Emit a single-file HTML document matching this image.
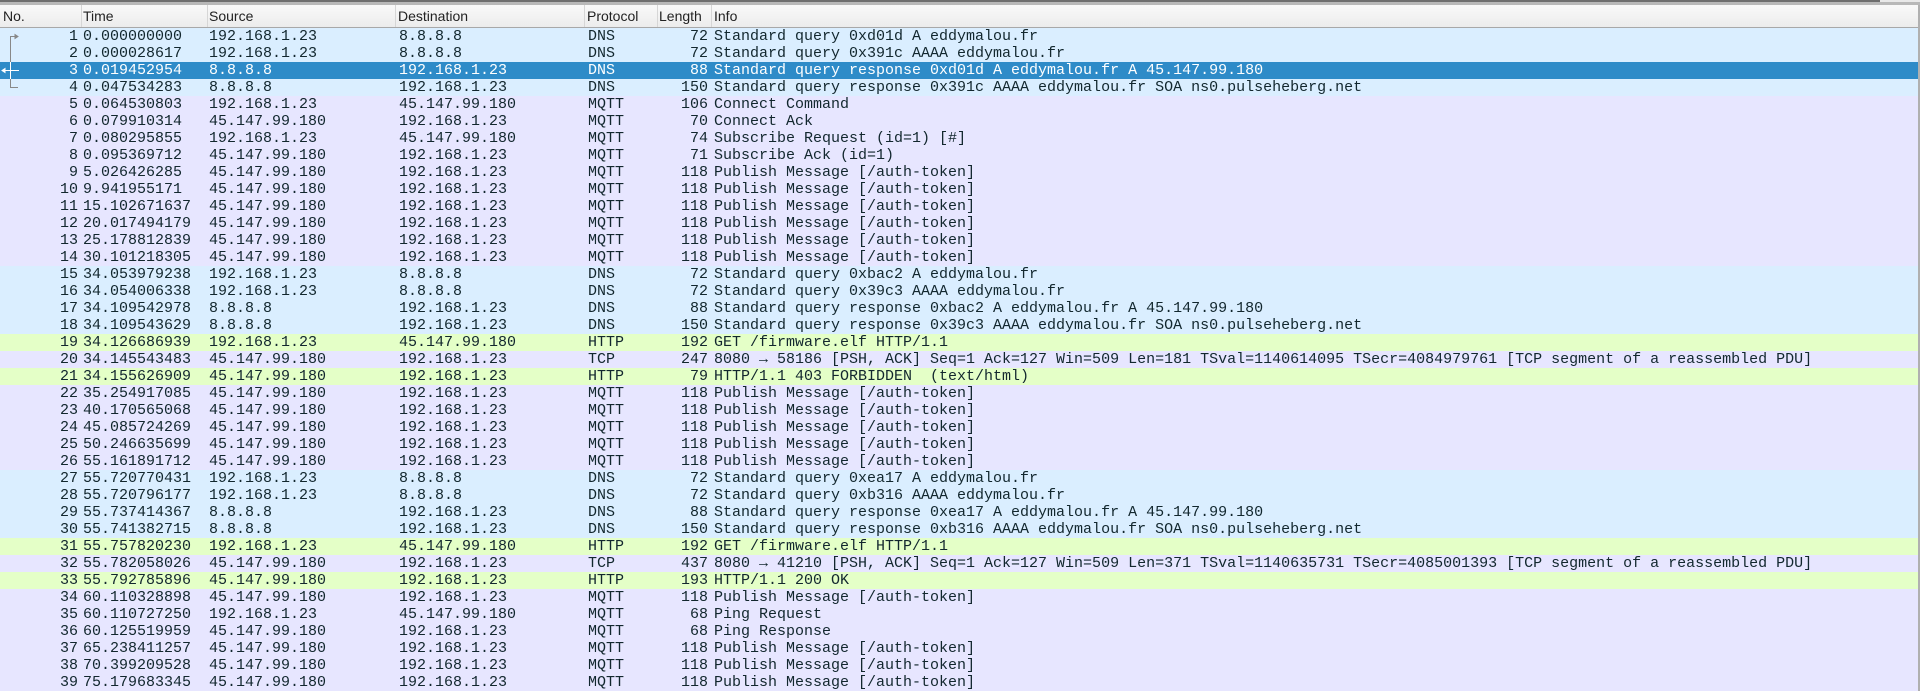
<!DOCTYPE html>
<html><head><meta charset="utf-8"><style>
html,body{margin:0;padding:0;width:1920px;height:691px;overflow:hidden;background:#e8e8e8;}
#top{position:absolute;left:0;top:0;width:1880px;height:2px;background:#6e6e6e;}
#top2{position:absolute;left:0;top:2px;width:1920px;height:3px;background:#b8b8b8;}
#hdr{position:absolute;left:0;top:5px;width:1918px;height:22px;background:linear-gradient(#f9f9f9,#ececec);border-bottom:1px solid #a8a8a8;font:14px "Liberation Sans",sans-serif;color:#222;}
#hdr span{position:absolute;top:3px;}
#hdr i{position:absolute;top:0;width:1px;height:22px;background:#d6d6d6;}
#rows{position:absolute;left:0;top:28px;width:1918px;}
.r{position:relative;height:17px;font:15px "Liberation Mono",monospace;color:#12272e;white-space:pre;}
.r span{position:absolute;top:0;line-height:17px;}
.d{background:#daeeff}.m{background:#e7e6ff}.h{background:#e4ffc7}
.s{background:#2e8bc8;color:#fff}
.n{right:calc(1918px - 78px)}
.l{right:calc(1918px - 708px)}
#edge{position:absolute;left:1918px;top:5px;width:2px;height:686px;background:#b0b0b0;}
</style></head><body>
<div id="top"></div><div id="top2"></div>
<div id="hdr">
<span style="left:3px">No.</span><i style="left:81px"></i>
<span style="left:83px">Time</span><i style="left:207px"></i>
<span style="left:209px">Source</span><i style="left:395px"></i>
<span style="left:398px">Destination</span><i style="left:584px"></i>
<span style="left:587px">Protocol</span><i style="left:657px"></i>
<span style="left:659px">Length</span><i style="left:711px"></i>
<span style="left:714px">Info</span>
</div>
<div id="rows">
<div class="r d"><svg style="position:absolute;left:0;top:0" width="24" height="17"><path d="M10 8.5H18M18 8.5l-3-2v4z" stroke="#888" fill="#888"/><path d="M10.5 8.5V17" stroke="#888"/></svg><span class="n">1</span><span style="left:83px">0.000000000</span><span style="left:209px">192.168.1.23</span><span style="left:399px">8.8.8.8</span><span style="left:588px">DNS</span><span class="l">72</span><span style="left:714px">Standard query 0xd01d A eddymalou.fr</span></div>
<div class="r d"><svg style="position:absolute;left:0;top:0" width="24" height="17"><path d="M10.5 0V17" stroke="#888"/></svg><span class="n">2</span><span style="left:83px">0.000028617</span><span style="left:209px">192.168.1.23</span><span style="left:399px">8.8.8.8</span><span style="left:588px">DNS</span><span class="l">72</span><span style="left:714px">Standard query 0x391c AAAA eddymalou.fr</span></div>
<div class="r s"><svg style="position:absolute;left:0;top:0" width="24" height="17"><path d="M2 8.5H19M2 8.5l3-2v4z" stroke="#fff" fill="#fff"/><path d="M10.5 0V17" stroke="#fff"/></svg><span class="n">3</span><span style="left:83px">0.019452954</span><span style="left:209px">8.8.8.8</span><span style="left:399px">192.168.1.23</span><span style="left:588px">DNS</span><span class="l">88</span><span style="left:714px">Standard query response 0xd01d A eddymalou.fr A 45.147.99.180</span></div>
<div class="r d"><svg style="position:absolute;left:0;top:0" width="24" height="17"><path d="M10.5 0V8.5H18" stroke="#888" fill="none"/></svg><span class="n">4</span><span style="left:83px">0.047534283</span><span style="left:209px">8.8.8.8</span><span style="left:399px">192.168.1.23</span><span style="left:588px">DNS</span><span class="l">150</span><span style="left:714px">Standard query response 0x391c AAAA eddymalou.fr SOA ns0.pulseheberg.net</span></div>
<div class="r m"><span class="n">5</span><span style="left:83px">0.064530803</span><span style="left:209px">192.168.1.23</span><span style="left:399px">45.147.99.180</span><span style="left:588px">MQTT</span><span class="l">106</span><span style="left:714px">Connect Command</span></div>
<div class="r m"><span class="n">6</span><span style="left:83px">0.079910314</span><span style="left:209px">45.147.99.180</span><span style="left:399px">192.168.1.23</span><span style="left:588px">MQTT</span><span class="l">70</span><span style="left:714px">Connect Ack</span></div>
<div class="r m"><span class="n">7</span><span style="left:83px">0.080295855</span><span style="left:209px">192.168.1.23</span><span style="left:399px">45.147.99.180</span><span style="left:588px">MQTT</span><span class="l">74</span><span style="left:714px">Subscribe Request (id=1) [#]</span></div>
<div class="r m"><span class="n">8</span><span style="left:83px">0.095369712</span><span style="left:209px">45.147.99.180</span><span style="left:399px">192.168.1.23</span><span style="left:588px">MQTT</span><span class="l">71</span><span style="left:714px">Subscribe Ack (id=1)</span></div>
<div class="r m"><span class="n">9</span><span style="left:83px">5.026426285</span><span style="left:209px">45.147.99.180</span><span style="left:399px">192.168.1.23</span><span style="left:588px">MQTT</span><span class="l">118</span><span style="left:714px">Publish Message [/auth-token]</span></div>
<div class="r m"><span class="n">10</span><span style="left:83px">9.941955171</span><span style="left:209px">45.147.99.180</span><span style="left:399px">192.168.1.23</span><span style="left:588px">MQTT</span><span class="l">118</span><span style="left:714px">Publish Message [/auth-token]</span></div>
<div class="r m"><span class="n">11</span><span style="left:83px">15.102671637</span><span style="left:209px">45.147.99.180</span><span style="left:399px">192.168.1.23</span><span style="left:588px">MQTT</span><span class="l">118</span><span style="left:714px">Publish Message [/auth-token]</span></div>
<div class="r m"><span class="n">12</span><span style="left:83px">20.017494179</span><span style="left:209px">45.147.99.180</span><span style="left:399px">192.168.1.23</span><span style="left:588px">MQTT</span><span class="l">118</span><span style="left:714px">Publish Message [/auth-token]</span></div>
<div class="r m"><span class="n">13</span><span style="left:83px">25.178812839</span><span style="left:209px">45.147.99.180</span><span style="left:399px">192.168.1.23</span><span style="left:588px">MQTT</span><span class="l">118</span><span style="left:714px">Publish Message [/auth-token]</span></div>
<div class="r m"><span class="n">14</span><span style="left:83px">30.101218305</span><span style="left:209px">45.147.99.180</span><span style="left:399px">192.168.1.23</span><span style="left:588px">MQTT</span><span class="l">118</span><span style="left:714px">Publish Message [/auth-token]</span></div>
<div class="r d"><span class="n">15</span><span style="left:83px">34.053979238</span><span style="left:209px">192.168.1.23</span><span style="left:399px">8.8.8.8</span><span style="left:588px">DNS</span><span class="l">72</span><span style="left:714px">Standard query 0xbac2 A eddymalou.fr</span></div>
<div class="r d"><span class="n">16</span><span style="left:83px">34.054006338</span><span style="left:209px">192.168.1.23</span><span style="left:399px">8.8.8.8</span><span style="left:588px">DNS</span><span class="l">72</span><span style="left:714px">Standard query 0x39c3 AAAA eddymalou.fr</span></div>
<div class="r d"><span class="n">17</span><span style="left:83px">34.109542978</span><span style="left:209px">8.8.8.8</span><span style="left:399px">192.168.1.23</span><span style="left:588px">DNS</span><span class="l">88</span><span style="left:714px">Standard query response 0xbac2 A eddymalou.fr A 45.147.99.180</span></div>
<div class="r d"><span class="n">18</span><span style="left:83px">34.109543629</span><span style="left:209px">8.8.8.8</span><span style="left:399px">192.168.1.23</span><span style="left:588px">DNS</span><span class="l">150</span><span style="left:714px">Standard query response 0x39c3 AAAA eddymalou.fr SOA ns0.pulseheberg.net</span></div>
<div class="r h"><span class="n">19</span><span style="left:83px">34.126686939</span><span style="left:209px">192.168.1.23</span><span style="left:399px">45.147.99.180</span><span style="left:588px">HTTP</span><span class="l">192</span><span style="left:714px">GET /firmware.elf HTTP/1.1</span></div>
<div class="r m"><span class="n">20</span><span style="left:83px">34.145543483</span><span style="left:209px">45.147.99.180</span><span style="left:399px">192.168.1.23</span><span style="left:588px">TCP</span><span class="l">247</span><span style="left:714px">8080 → 58186 [PSH, ACK] Seq=1 Ack=127 Win=509 Len=181 TSval=1140614095 TSecr=4084979761 [TCP segment of a reassembled PDU]</span></div>
<div class="r h"><span class="n">21</span><span style="left:83px">34.155626909</span><span style="left:209px">45.147.99.180</span><span style="left:399px">192.168.1.23</span><span style="left:588px">HTTP</span><span class="l">79</span><span style="left:714px">HTTP/1.1 403 FORBIDDEN  (text/html)</span></div>
<div class="r m"><span class="n">22</span><span style="left:83px">35.254917085</span><span style="left:209px">45.147.99.180</span><span style="left:399px">192.168.1.23</span><span style="left:588px">MQTT</span><span class="l">118</span><span style="left:714px">Publish Message [/auth-token]</span></div>
<div class="r m"><span class="n">23</span><span style="left:83px">40.170565068</span><span style="left:209px">45.147.99.180</span><span style="left:399px">192.168.1.23</span><span style="left:588px">MQTT</span><span class="l">118</span><span style="left:714px">Publish Message [/auth-token]</span></div>
<div class="r m"><span class="n">24</span><span style="left:83px">45.085724269</span><span style="left:209px">45.147.99.180</span><span style="left:399px">192.168.1.23</span><span style="left:588px">MQTT</span><span class="l">118</span><span style="left:714px">Publish Message [/auth-token]</span></div>
<div class="r m"><span class="n">25</span><span style="left:83px">50.246635699</span><span style="left:209px">45.147.99.180</span><span style="left:399px">192.168.1.23</span><span style="left:588px">MQTT</span><span class="l">118</span><span style="left:714px">Publish Message [/auth-token]</span></div>
<div class="r m"><span class="n">26</span><span style="left:83px">55.161891712</span><span style="left:209px">45.147.99.180</span><span style="left:399px">192.168.1.23</span><span style="left:588px">MQTT</span><span class="l">118</span><span style="left:714px">Publish Message [/auth-token]</span></div>
<div class="r d"><span class="n">27</span><span style="left:83px">55.720770431</span><span style="left:209px">192.168.1.23</span><span style="left:399px">8.8.8.8</span><span style="left:588px">DNS</span><span class="l">72</span><span style="left:714px">Standard query 0xea17 A eddymalou.fr</span></div>
<div class="r d"><span class="n">28</span><span style="left:83px">55.720796177</span><span style="left:209px">192.168.1.23</span><span style="left:399px">8.8.8.8</span><span style="left:588px">DNS</span><span class="l">72</span><span style="left:714px">Standard query 0xb316 AAAA eddymalou.fr</span></div>
<div class="r d"><span class="n">29</span><span style="left:83px">55.737414367</span><span style="left:209px">8.8.8.8</span><span style="left:399px">192.168.1.23</span><span style="left:588px">DNS</span><span class="l">88</span><span style="left:714px">Standard query response 0xea17 A eddymalou.fr A 45.147.99.180</span></div>
<div class="r d"><span class="n">30</span><span style="left:83px">55.741382715</span><span style="left:209px">8.8.8.8</span><span style="left:399px">192.168.1.23</span><span style="left:588px">DNS</span><span class="l">150</span><span style="left:714px">Standard query response 0xb316 AAAA eddymalou.fr SOA ns0.pulseheberg.net</span></div>
<div class="r h"><span class="n">31</span><span style="left:83px">55.757820230</span><span style="left:209px">192.168.1.23</span><span style="left:399px">45.147.99.180</span><span style="left:588px">HTTP</span><span class="l">192</span><span style="left:714px">GET /firmware.elf HTTP/1.1</span></div>
<div class="r m"><span class="n">32</span><span style="left:83px">55.782058026</span><span style="left:209px">45.147.99.180</span><span style="left:399px">192.168.1.23</span><span style="left:588px">TCP</span><span class="l">437</span><span style="left:714px">8080 → 41210 [PSH, ACK] Seq=1 Ack=127 Win=509 Len=371 TSval=1140635731 TSecr=4085001393 [TCP segment of a reassembled PDU]</span></div>
<div class="r h"><span class="n">33</span><span style="left:83px">55.792785896</span><span style="left:209px">45.147.99.180</span><span style="left:399px">192.168.1.23</span><span style="left:588px">HTTP</span><span class="l">193</span><span style="left:714px">HTTP/1.1 200 OK</span></div>
<div class="r m"><span class="n">34</span><span style="left:83px">60.110328898</span><span style="left:209px">45.147.99.180</span><span style="left:399px">192.168.1.23</span><span style="left:588px">MQTT</span><span class="l">118</span><span style="left:714px">Publish Message [/auth-token]</span></div>
<div class="r m"><span class="n">35</span><span style="left:83px">60.110727250</span><span style="left:209px">192.168.1.23</span><span style="left:399px">45.147.99.180</span><span style="left:588px">MQTT</span><span class="l">68</span><span style="left:714px">Ping Request</span></div>
<div class="r m"><span class="n">36</span><span style="left:83px">60.125519959</span><span style="left:209px">45.147.99.180</span><span style="left:399px">192.168.1.23</span><span style="left:588px">MQTT</span><span class="l">68</span><span style="left:714px">Ping Response</span></div>
<div class="r m"><span class="n">37</span><span style="left:83px">65.238411257</span><span style="left:209px">45.147.99.180</span><span style="left:399px">192.168.1.23</span><span style="left:588px">MQTT</span><span class="l">118</span><span style="left:714px">Publish Message [/auth-token]</span></div>
<div class="r m"><span class="n">38</span><span style="left:83px">70.399209528</span><span style="left:209px">45.147.99.180</span><span style="left:399px">192.168.1.23</span><span style="left:588px">MQTT</span><span class="l">118</span><span style="left:714px">Publish Message [/auth-token]</span></div>
<div class="r m"><span class="n">39</span><span style="left:83px">75.179683345</span><span style="left:209px">45.147.99.180</span><span style="left:399px">192.168.1.23</span><span style="left:588px">MQTT</span><span class="l">118</span><span style="left:714px">Publish Message [/auth-token]</span></div>
</div>
<div id="edge"></div>
</body></html>
